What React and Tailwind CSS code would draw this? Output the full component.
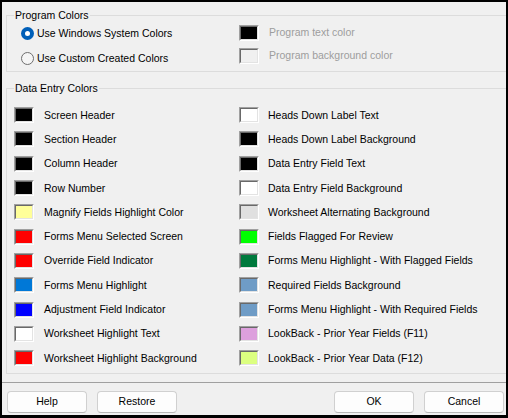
import React from "react";

const FONT = { fontFamily: '"Liberation Sans", Arial, sans-serif' };

const left = [
  ["Screen Header", "bg-black"],
  ["Section Header", "bg-black"],
  ["Column Header", "bg-black"],
  ["Row Number", "bg-black"],
  ["Magnify Fields Highlight Color", "bg-[#ffff99]"],
  ["Forms Menu Selected Screen", "bg-[#ff0000]"],
  ["Override Field Indicator", "bg-[#ff0000]"],
  ["Forms Menu Highlight", "bg-[#0078d7]"],
  ["Adjustment Field Indicator", "bg-[#0000ff]"],
  ["Worksheet Highlight Text", "bg-white"],
  ["Worksheet Highlight Background", "bg-[#ff0000]"],
];

const right = [
  ["Heads Down Label Text", "bg-white"],
  ["Heads Down Label Background", "bg-black"],
  ["Data Entry Field Text", "bg-black"],
  ["Data Entry Field Background", "bg-white"],
  ["Worksheet Alternating Background", "bg-[#e0e0e0]"],
  ["Fields Flagged For Review", "bg-[#00ff00]"],
  ["Forms Menu Highlight - With Flagged Fields", "bg-[#007a3d]"],
  ["Required Fields Background", "bg-[#6f9cc6]"],
  ["Forms Menu Highlight - With Required Fields", "bg-[#6f9cc6]"],
  ["LookBack - Prior Year Fields (F11)", "bg-[#dda0dd]"],
  ["LookBack - Prior Year Data (F12)", "bg-[#dcff80]"],
];

const Swatch = ({ color }) => (
  <div className="w-[20px] h-[16px] shrink-0 border border-t-[#a0a0a0] border-l-[#a0a0a0] border-r-white border-b-white">
    <div
      className={
        "w-full h-full border border-t-[#696969] border-l-[#696969] border-r-[#e3e3e3] border-b-[#e3e3e3] " +
        color
      }
    />
  </div>
);

const Row = ({ label, color, gap }) => (
  <div className="h-[24.3px] flex items-center">
    <Swatch color={color} />
    <span className={"text-[10.5px] leading-[13px] text-black whitespace-nowrap " + gap}>
      {label}
    </span>
  </div>
);

const Radio = ({ checked, label }) => (
  <div className="h-[25px] flex items-center">
    {checked ? (
      <div className="w-[13px] h-[13px] rounded-full bg-[#005fb8] grid place-items-center">
        <div className="w-[5px] h-[5px] rounded-full bg-white" />
      </div>
    ) : (
      <div className="w-[13px] h-[13px] rounded-full border border-[#6e6e6e] bg-[#f5f5f5]" />
    )}
    <span className="ml-[3px] text-[10.5px] leading-[13px] text-black">{label}</span>
  </div>
);

const Button = ({ children }) => (
  <button className="w-[80px] h-[22px] bg-[#fdfdfd] border border-[#d0d0d0] border-b-[#b8b8b8] rounded-[4px] text-[10.5px] text-black">
    {children}
  </button>
);

export default function App() {
  return (
    <div className="w-[508px] h-[418px] bg-black pt-[2px] pl-[2px] pr-[2px] pb-[3px]" style={FONT}>
      <div className="h-full bg-[#f0f0f0] flex flex-col overflow-hidden">
        {/* Program Colors */}
        <div className="relative mt-[13px] ml-[4px] h-[57px] border border-r-0 border-[#dcdcdc] flex pt-[5px]">
          <span className="absolute left-[7px] top-[-7px] px-[1px] bg-[#f0f0f0] text-[10.5px] leading-[13px] text-black">
            Program Colors
          </span>
          <div className="w-[232px] pl-[14px] flex flex-col">
            <Radio checked label="Use Windows System Colors" />
            <Radio label="Use Custom Created Colors" />
          </div>
          <div className="flex flex-col">
            <div className="h-[23px] flex items-center">
              <Swatch color="bg-black" />
              <span className="ml-[10px] text-[10.5px] leading-[13px] text-[#9d9d9d]">Program text color</span>
            </div>
            <div className="h-[23px] flex items-center">
              <Swatch color="bg-[#f0f0f0]" />
              <span className="ml-[10px] text-[10.5px] leading-[13px] text-[#9d9d9d]">Program background color</span>
            </div>
          </div>
        </div>

        {/* Data Entry Colors */}
        <div className="relative mt-[16px] ml-[4px] h-[286px] border border-r-0 border-[#dcdcdc] flex pt-[14px]">
          <span className="absolute left-[7px] top-[-7px] px-[1px] bg-[#f0f0f0] text-[10.5px] leading-[13px] text-black">
            Data Entry Colors
          </span>
          <div className="w-[232px] pl-[7px] flex flex-col">
            {left.map(([l, c]) => (
              <Row key={l} label={l} color={c} gap="ml-[10px]" />
            ))}
          </div>
          <div className="flex flex-col">
            {right.map(([l, c]) => (
              <Row key={l} label={l} color={c} gap="ml-[9px]" />
            ))}
          </div>
        </div>

        <div className="mt-[8px] h-px bg-[#a0a0a0]" />

        <div className="mt-[8px] pl-[5px] pr-[2px] flex justify-between">
          <div className="flex gap-[10px]">
            <Button>Help</Button>
            <Button>Restore</Button>
          </div>
          <div className="flex gap-[10px]">
            <Button>OK</Button>
            <Button>Cancel</Button>
          </div>
        </div>
      </div>
    </div>
  );
}
